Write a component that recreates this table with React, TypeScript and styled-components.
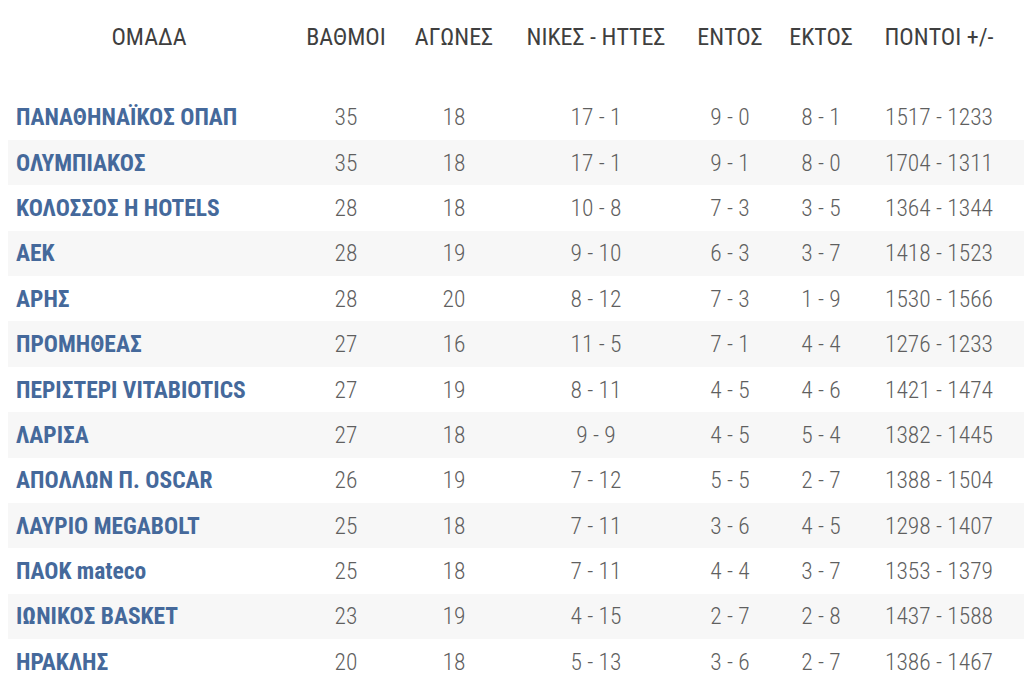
import React from 'react'
import styled, { createGlobalStyle } from 'styled-components'

const GlobalStyle = createGlobalStyle`
  html, body {
    margin: 0;
    padding: 0;
    background: #fff;
  }
  body {
    font-family: 'Roboto Condensed', Roboto, 'Liberation Sans', sans-serif;
  }
`

const COLUMNS = '282px 112px 104px 180px 88px 94px 142px 1fr'

const Table = styled.div`
  display: flex;
  flex-direction: column;
  padding-left: 8px;
  width: 100%;
  box-sizing: border-box;
`

const HeaderRow = styled.div`
  display: grid;
  grid-template-columns: ${COLUMNS};
  align-items: center;
  height: 74px;
  margin-bottom: 20.5px;
`

const HeadCell = styled.div`
  text-align: center;
  font-size: 24px;
  font-weight: 400;
  color: #3f3f3f;
  white-space: nowrap;
`

const Row = styled.div<{ $striped: boolean }>`
  display: grid;
  grid-template-columns: ${COLUMNS};
  align-items: center;
  height: 45.4px;
  background: ${(p) => (p.$striped ? '#f7f7f7' : '#fff')};
`

const TeamCell = styled.div`
  padding-left: 8px;
  font-size: 23.5px;
  font-weight: 700;
  color: #45699b;
  white-space: nowrap;
`

const Cell = styled.div`
  text-align: center;
  font-size: 23.5px;
  font-weight: 300;
  color: #5f5f5f;
  white-space: nowrap;
`

type Team = {
  name: string
  pts: number
  games: number
  wl: string
  home: string
  away: string
  points: string
}

const teams: Team[] = [
  { name: 'ΠΑΝΑΘΗΝΑΪΚΟΣ ΟΠΑΠ', pts: 35, games: 18, wl: '17 - 1', home: '9 - 0', away: '8 - 1', points: '1517 - 1233' },
  { name: 'ΟΛΥΜΠΙΑΚΟΣ', pts: 35, games: 18, wl: '17 - 1', home: '9 - 1', away: '8 - 0', points: '1704 - 1311' },
  { name: 'ΚΟΛΟΣΣΟΣ Η HOTELS', pts: 28, games: 18, wl: '10 - 8', home: '7 - 3', away: '3 - 5', points: '1364 - 1344' },
  { name: 'ΑΕΚ', pts: 28, games: 19, wl: '9 - 10', home: '6 - 3', away: '3 - 7', points: '1418 - 1523' },
  { name: 'ΑΡΗΣ', pts: 28, games: 20, wl: '8 - 12', home: '7 - 3', away: '1 - 9', points: '1530 - 1566' },
  { name: 'ΠΡΟΜΗΘΕΑΣ', pts: 27, games: 16, wl: '11 - 5', home: '7 - 1', away: '4 - 4', points: '1276 - 1233' },
  { name: 'ΠΕΡΙΣΤΕΡΙ VITABIOTICS', pts: 27, games: 19, wl: '8 - 11', home: '4 - 5', away: '4 - 6', points: '1421 - 1474' },
  { name: 'ΛΑΡΙΣΑ', pts: 27, games: 18, wl: '9 - 9', home: '4 - 5', away: '5 - 4', points: '1382 - 1445' },
  { name: 'ΑΠΟΛΛΩΝ Π. OSCAR', pts: 26, games: 19, wl: '7 - 12', home: '5 - 5', away: '2 - 7', points: '1388 - 1504' },
  { name: 'ΛΑΥΡΙΟ MEGABOLT', pts: 25, games: 18, wl: '7 - 11', home: '3 - 6', away: '4 - 5', points: '1298 - 1407' },
  { name: 'ΠΑΟΚ mateco', pts: 25, games: 18, wl: '7 - 11', home: '4 - 4', away: '3 - 7', points: '1353 - 1379' },
  { name: 'ΙΩΝΙΚΟΣ BASKET', pts: 23, games: 19, wl: '4 - 15', home: '2 - 7', away: '2 - 8', points: '1437 - 1588' },
  { name: 'ΗΡΑΚΛΗΣ', pts: 20, games: 18, wl: '5 - 13', home: '3 - 6', away: '2 - 7', points: '1386 - 1467' },
]

const headers = ['ΟΜΑΔΑ', 'ΒΑΘΜΟΙ', 'ΑΓΩΝΕΣ', 'ΝΙΚΕΣ - ΗΤΤΕΣ', 'ΕΝΤΟΣ', 'ΕΚΤΟΣ', 'ΠΟΝΤΟΙ +/-']

const App = () => {
  return (
    <>
      <GlobalStyle />
      <Table>
        <HeaderRow>
          {headers.map((h) => (
            <HeadCell key={h}>{h}</HeadCell>
          ))}
        </HeaderRow>
        {teams.map((t, i) => (
          <Row key={t.name} $striped={i % 2 === 1}>
            <TeamCell>{t.name}</TeamCell>
            <Cell>{t.pts}</Cell>
            <Cell>{t.games}</Cell>
            <Cell>{t.wl}</Cell>
            <Cell>{t.home}</Cell>
            <Cell>{t.away}</Cell>
            <Cell>{t.points}</Cell>
          </Row>
        ))}
      </Table>
    </>
  )
}

export default App
